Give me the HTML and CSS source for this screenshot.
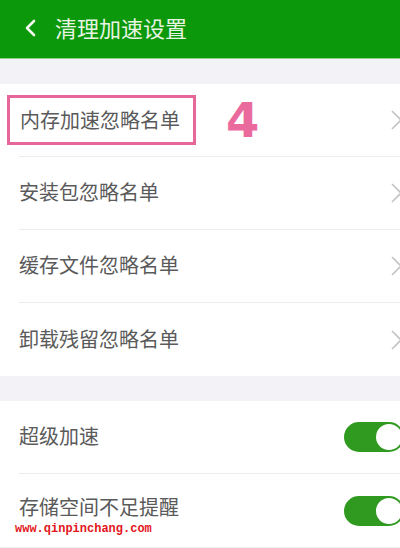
FILE: index.html
```html
<!DOCTYPE html>
<html lang="zh-CN">

<head>
    <meta charset="UTF-8">
    <meta name="viewport" content="width=device-width, initial-scale=1.0">
    <title>清理加速设置</title>
    <link rel="stylesheet" href="styles.css">
</head>

<body>
    <div class="header">
        <svg class="back" width="13" height="18" viewBox="0 0 13 18">
            <path d="M10 2 L3 9 L10 16" fill="none" stroke="#f2f8ee" stroke-width="2.6" stroke-linecap="round" stroke-linejoin="round" />
        </svg>
        <h1>清理加速设置</h1>
    </div>

    <div class="group">
        <div class="row">
            <span class="label marked">内存加速忽略名单</span>
            <span class="step">4</span>
            <svg class="arrow" width="12" height="20" viewBox="0 0 12 20">
                <path d="M1 1 L10 10 L1 19" fill="none" stroke="#c4c4c4" stroke-width="1.6" />
            </svg>
        </div>
        <div class="row">
            <span class="label">安装包忽略名单</span>
            <svg class="arrow" width="12" height="20" viewBox="0 0 12 20">
                <path d="M1 1 L10 10 L1 19" fill="none" stroke="#c4c4c4" stroke-width="1.6" />
            </svg>
        </div>
        <div class="row">
            <span class="label">缓存文件忽略名单</span>
            <svg class="arrow" width="12" height="20" viewBox="0 0 12 20">
                <path d="M1 1 L10 10 L1 19" fill="none" stroke="#c4c4c4" stroke-width="1.6" />
            </svg>
        </div>
        <div class="row">
            <span class="label">卸载残留忽略名单</span>
            <svg class="arrow" width="12" height="20" viewBox="0 0 12 20">
                <path d="M1 1 L10 10 L1 19" fill="none" stroke="#c4c4c4" stroke-width="1.6" />
            </svg>
        </div>
    </div>

    <div class="group">
        <div class="row">
            <span class="label">超级加速</span>
            <span class="switch on"><span class="knob"></span></span>
        </div>
        <div class="row">
            <span class="label raised">存储空间不足提醒</span>
            <span class="switch on"><span class="knob"></span></span>
        </div>
    </div>

    <div class="watermark">www.qinpinchang.com</div>
</body>

</html>
```

FILE: styles.css
```css
body {
    margin: 0;
    width: 400px;
    height: 548px;
    overflow: hidden;
    position: relative;
    background-color: #f3f2f6;
    font-family: "Noto Sans CJK SC", "Noto Sans", sans-serif;
    color: #5a5a5a;
}

.header {
    height: 58px;
    display: flex;
    align-items: center;
    padding-left: 24px;
    background-color: #0b980b;
    border-bottom: 1px solid #8fcf86;
}

.back {
    margin-right: 18px;
    margin-top: -2px;
}

.header h1 {
    margin: 0;
    margin-top: -4px;
    font-size: 22px;
    font-weight: normal;
    color: #e8f4e2;
}

.group {
    margin-top: 25px;
    background-color: #fff;
}

.row {
    height: 73px;
    display: flex;
    align-items: center;
    margin-left: 19px;
    border-bottom: 1px solid #ececec;
    box-sizing: border-box;
}

.group .row:last-child {
    margin-left: 0;
    padding-left: 19px;
    border-bottom: none;
}

.group:last-of-type .row:last-child {
    margin-left: 19px;
    padding-left: 0;
    border-bottom: 1px solid #ececec;
}

.label {
    font-size: 20px;
    line-height: 1;
    margin-top: -2px;
    flex: 1;
}

.label.raised {
    margin-top: -7px;
}

.label.marked {
    flex: none;
    margin-left: -12px;
    margin-top: 0;
    padding: 12px 13px 12px 10px;
    border: 3px solid #e8679b;
}

.step {
    flex: 1;
    margin-left: 30px;
    font-family: "DejaVu Sans", sans-serif;
    font-size: 48px;
    font-weight: bold;
    line-height: 1;
    color: #ea6a9e;
}

.arrow {
    margin-right: -3px;
}

.switch {
    width: 60px;
    height: 30px;
    border-radius: 15px;
    background-color: #2f9a1f;
    margin-right: -4px;
    display: flex;
    align-items: center;
    justify-content: flex-end;
    padding: 0 2px;
    box-sizing: border-box;
}

.knob {
    width: 26px;
    height: 26px;
    border-radius: 50%;
    background-color: #fff;
}

.watermark {
    position: absolute;
    left: 15px;
    top: 523px;
    font-family: "Liberation Mono", monospace;
    font-size: 12px;
    font-weight: bold;
    line-height: 1;
    color: #e2161c;
}
```
